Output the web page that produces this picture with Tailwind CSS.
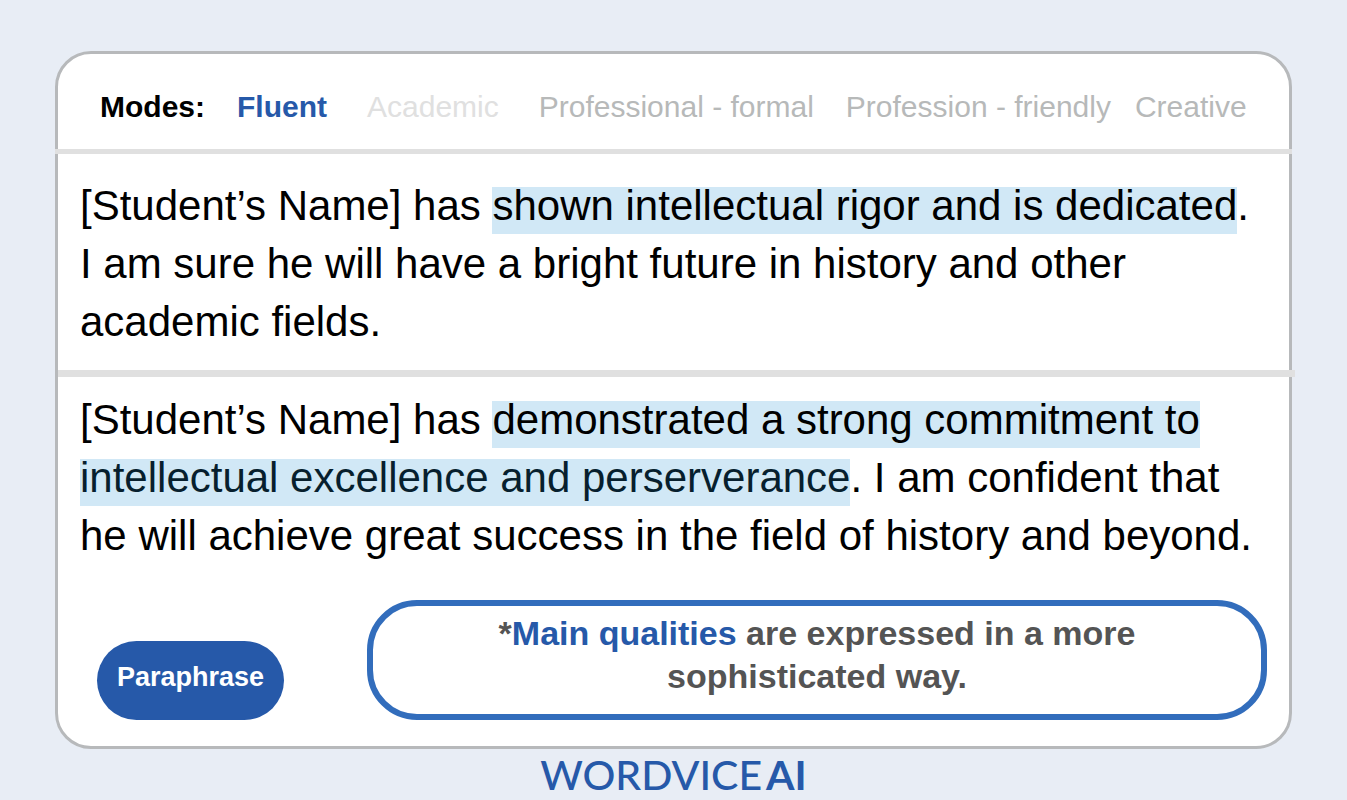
<!DOCTYPE html>
<html lang="en">
<head>
    <meta charset="UTF-8">
    <meta name="viewport" content="width=device-width, initial-scale=1.0">
    <title>Wordvice AI - Paraphraser</title>
    <script src="https://cdn.jsdelivr.net/npm/@tailwindcss/browser@4"></script>
</head>
<body class="bg-[#e8edf5] min-h-screen overflow-x-hidden font-['Liberation_Sans',Arial,sans-serif] text-black">
    <main class="mx-[55px] mt-[51px] bg-white border-3 border-[#b7b9bb] rounded-[36px]">

        <!-- Modes -->
        <nav aria-label="Modes" class="flex items-center pt-2.5 pl-[42px] h-[95px] text-[30px] whitespace-nowrap text-[#b7b9b9]">
            <span class="font-bold text-black">Modes:</span>
            <button type="button" class="ml-8 font-bold text-[#2659a9]">Fluent</button>
            <button type="button" class="ml-10 text-[#e0e0e0]">Academic</button>
            <button type="button" class="ml-10">Professional - formal</button>
            <button type="button" class="ml-8">Profession - friendly</button>
            <button type="button" class="ml-6">Creative</button>
        </nav>

        <div class="-mx-[3px] h-[5px] bg-[#e0e0e0]"></div>

        <!-- Original text -->
        <section class="pl-[22px] pr-6 pt-[23px] pb-[19px] text-[42px] leading-[58px]">
            <p>[Student’s Name] has <mark class="pb-[5px] text-black bg-transparent bg-[linear-gradient(transparent_5px,#d1e8f6_5px)]">shown intellectual rigor and is dedicated</mark>. I am sure he will have a bright future in history and other academic fields.</p>
        </section>

        <div class="-mr-[6px] h-[7px] bg-[#e0e0e0]"></div>

        <!-- Paraphrased text -->
        <section class="pl-[22px] pr-6 pt-[14px] text-[42px] leading-[58px]">
            <p>[Student’s Name] has <mark class="pb-[5px] text-black bg-transparent box-decoration-clone bg-[linear-gradient(transparent_5px,#d1e8f6_5px)]">demonstrated a strong commitment to <span class="text-[#071f2e]">intellectual excellence and perserverance</span></mark>. I am confident that he will achieve great success in the field of history and beyond.</p>
        </section>

        <!-- Action and note -->
        <div class="flex items-end pt-[35px] pb-[26px] pl-[39px] pr-[22px]">
            <button type="button" class="shrink-0 w-[187px] h-[79px] pb-1.5 rounded-full bg-[#2659a9] text-[27px] font-bold text-white">Paraphrase</button>
            <p class="ml-[83px] grow px-24 pt-[6px] pb-[16px] border-6 border-[#326dbc] rounded-[50px] text-center text-[34px] leading-[43px] font-bold text-[#545454]">*<span class="text-[#2659a9]">Main qualities</span> are expressed in a more sophisticated way.</p>
        </div>
    </main>

    <footer class="flex justify-center">
        <a href="#" class="flex gap-1 font-['Lato',sans-serif] text-[41px] leading-[51px] font-medium whitespace-nowrap text-[#2659a9]">
            <span>WORDVICE</span>
            <span class="font-bold">AI</span>
        </a>
    </footer>
</body>
</html>
